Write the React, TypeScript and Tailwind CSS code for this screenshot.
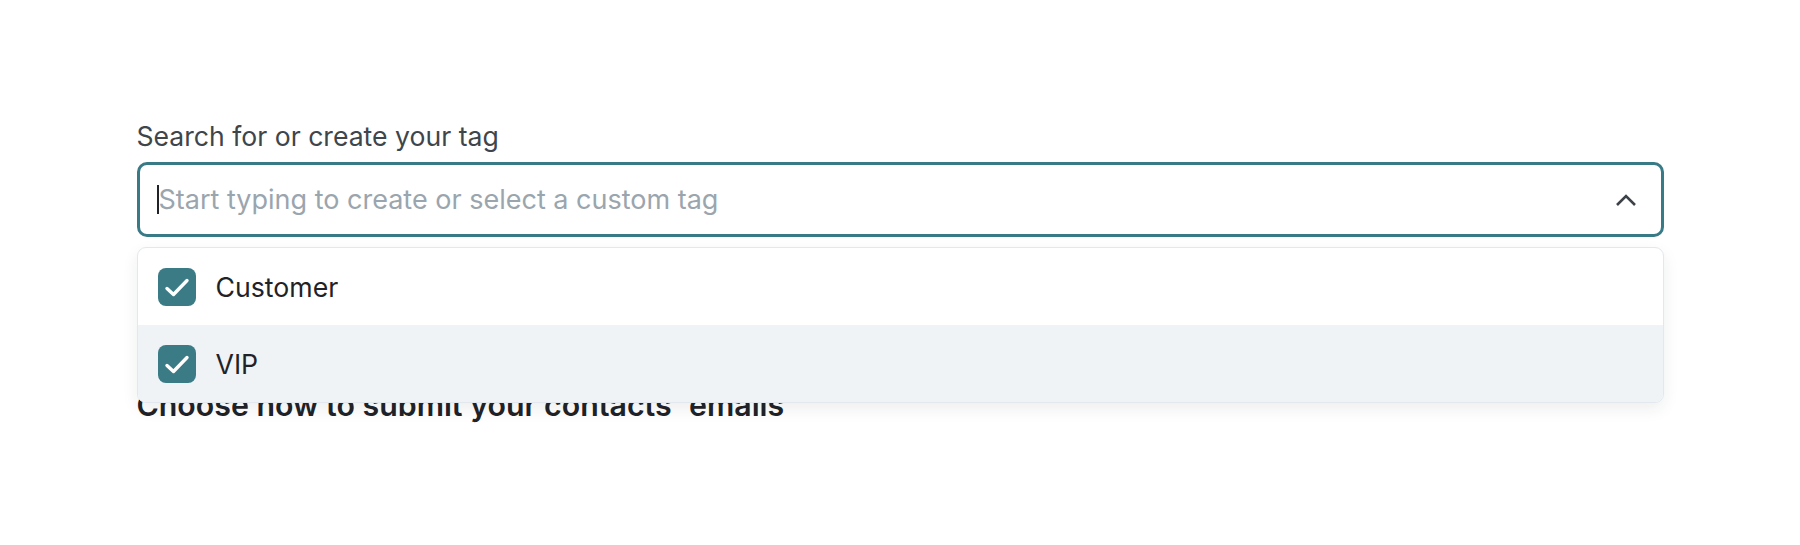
import React from "react";

function Check() {
  return (
    <span className="flex h-[38px] w-[38px] shrink-0 items-center justify-center rounded-[8px] bg-[#3a7b86]">
      <svg width="38" height="38" viewBox="0 0 38 38" fill="none">
        <path d="M9 20.5 L15.5 26.5 L29 12.5" stroke="#ffffff" strokeWidth="3.4" strokeLinecap="round" strokeLinejoin="round" />
      </svg>
    </span>
  );
}

export default function App() {
  return (
    <div className="h-[545px] w-full bg-white font-['Inter',sans-serif]">
      <div className="mx-auto w-[1527px] pt-[120px]">
        <label className="block text-[26.6px] leading-[32px] text-[#3e454b]">Search for or create your tag</label>
        <div className="relative mt-[10px]">
          <div className="flex h-[75px] items-center rounded-[10px] border-[3px] border-[#387b86] bg-white pl-[17px] pr-[24px]">
            <span className="h-[29px] w-[2px] shrink-0 bg-[#1f2328]" />
            <span className="flex-1 text-[27px] leading-[32px] text-[#9aa5ae]">
              Start typing to create or select a custom tag
            </span>
            <svg width="22" height="14" viewBox="0 0 22 14" fill="none">
              <path d="M2 12 L11 3 L20 12" stroke="#3c4247" strokeWidth="2.6" strokeLinecap="butt" strokeLinejoin="miter" />
            </svg>
          </div>
          <div className="absolute left-0 right-0 top-[85px] z-10 overflow-hidden rounded-[9px] border border-[#e2e8ee] bg-white shadow-[0_6px_16px_rgba(30,40,50,0.08)]">
            <div className="flex h-[77px] items-center gap-[20px] pl-[20px]">
              <Check />
              <span className="text-[26.7px] leading-[32px] text-[#1f2328]">Customer</span>
            </div>
            <div className="flex h-[77px] items-center gap-[20px] bg-[#eff3f6] pl-[20px]">
              <Check />
              <span className="text-[26.7px] leading-[32px] text-[#1f2328]">VIP</span>
            </div>
          </div>
        </div>
        <h2 className="mt-[150px] text-[30.3px] font-semibold leading-[36px] text-[#1f2328]">
          Choose how to submit your contacts' emails
        </h2>
      </div>
    </div>
  );
}
